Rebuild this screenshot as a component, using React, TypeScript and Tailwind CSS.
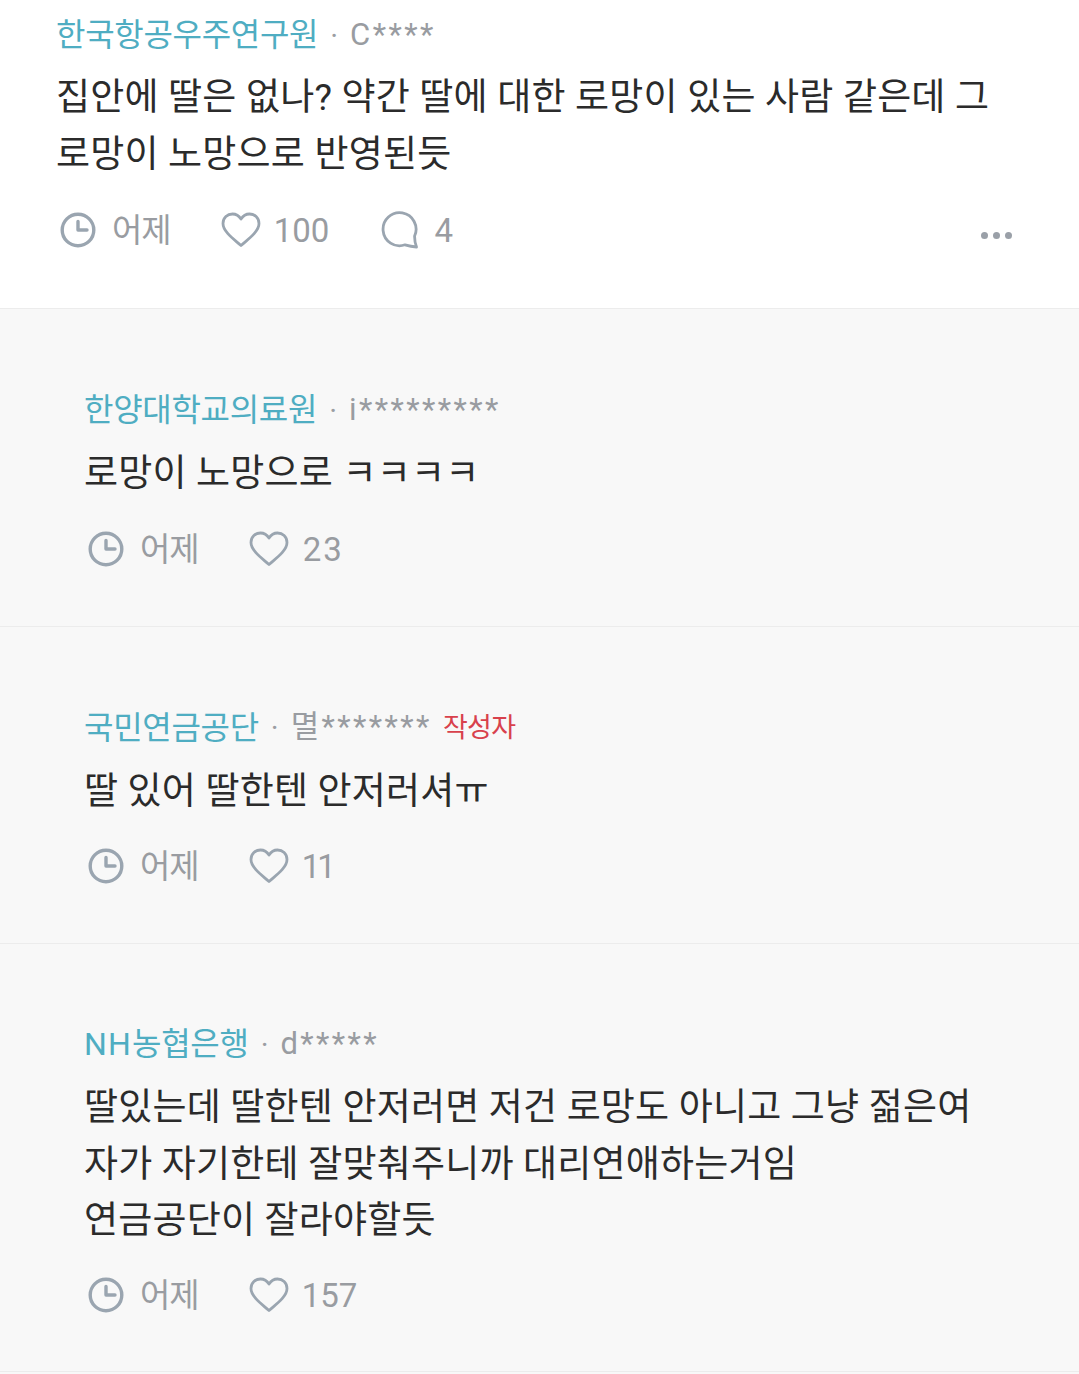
import React from "react";

const Clock = () => (
  <svg width="36" height="36" viewBox="0 0 36 36" fill="none" stroke="#9aa5b0" strokeWidth="3.4" strokeLinecap="round" strokeLinejoin="round">
    <circle cx="18" cy="18" r="15.8" />
    <path d="M18 9.500V18H27" />
  </svg>
);
const Heart = () => (
  <svg width="40" height="36" viewBox="0 0 40 36" fill="none" stroke="#9aa5b0" strokeWidth="2.8" strokeLinejoin="round">
    <path d="M20 33.500C14 28 2 20 2 11.500 2 5.500 6.500 2 11.500 2 15 2 18 3.800 20 7 22 3.800 25 2 28.500 2 33.500 2 38 5.500 38 11.500 38 20 26 28 20 33.500Z" />
  </svg>
);
const Bubble = () => (
  <svg width="38" height="38" viewBox="0 0 38 38" fill="none" stroke="#9aa5b0" strokeWidth="2.8" strokeLinejoin="round" strokeLinecap="round">
    <path d="M33.600 25A16.500 16.500 0 1 0 24 33.800Q30 35.500 35.500 36Q33.500 31 33.600 25Z" />
  </svg>
);
const Stat = ({ icon, text, cls, textCls }: { icon: React.ReactNode; text: string; cls: string; textCls?: string }) => (
  <div className={`flex items-center ${cls}`}>
    {icon}
    <span className={`text-[33px] leading-[40px] text-[#999ca1] font-normal translate-y-[1px] ${textCls ?? ""}`}>{text}</span>
  </div>
);

function Comment({ org, user, author, lines, likes, likesCls, replies, first, last }: { org: React.ReactNode; user: string; author?: boolean; lines: string[]; likes: string; likesCls?: string; replies?: string; first?: boolean; last?: boolean }) {
  const shell = first
    ? "bg-white h-[309px] pl-[56px] pt-[10px] pr-[64px]"
    : last
      ? "bg-[#f8f8f8] pl-[84px] pt-[75px] pr-[64px] pb-[56px]"
      : "bg-[#f8f8f8] pl-[84px] pt-[76px] pr-[64px] pb-[57px]";
  return (
    <section className={`${shell} border-b border-[#ececec]`}>
      <div className="flex items-center h-[50px]">
        <span className="text-[32px] tracking-[-0.3px] text-[#4fadc2] font-normal">{org}</span>
        <span className="text-[#9b9ea3] text-[30px] ml-[12px] font-normal">·</span>
        <span className="text-[#999ca1] text-[31px] tracking-[2.4px] ml-[12px] font-normal">{user}</span>
        {author && <span className="text-[#d8414c] text-[27px] ml-[11px] tracking-[-0.6px] font-normal translate-y-[1px]">작성자</span>}
      </div>
      <div className={first ? "mt-[10px]" : "mt-[11px]"}>
        {lines.map((l) => (
          <div key={l} className="text-[37px] tracking-[0.2px] leading-[56.5px] text-[#2b2b2b] font-normal whitespace-nowrap">{l}</div>
        ))}
      </div>
      <div className={`flex items-center h-[40px] relative ${last ? "mt-[25px]" : first ? "mt-[27px]" : "mt-[26px]"}`}>
        <Stat icon={<Clock />} text="어제" cls="gap-[16px] ml-[4px]" textCls="tracking-[-1px]" />
        <Stat icon={<Heart />} text={likes} cls="gap-[13px] ml-[50px]" textCls={likesCls} />
        {replies && <Stat icon={<Bubble />} text={replies} cls="gap-[15px] ml-[52px]" />}
        {first && (
          <div className="absolute right-[3px] top-[22px] flex gap-[5px]">
            <span className="w-[7px] h-[7px] rounded-full bg-[#9aa0a8]" />
            <span className="w-[7px] h-[7px] rounded-full bg-[#9aa0a8]" />
            <span className="w-[7px] h-[7px] rounded-full bg-[#9aa0a8]" />
          </div>
        )}
      </div>
    </section>
  );
}

export default function App() {
  return (
    <div className="w-[1079px] h-[1374px] overflow-hidden bg-[#f8f8f8] font-['Roboto','Noto_Sans_CJK_KR',sans-serif]">
      <Comment first org="한국항공우주연구원" user="C****" lines={["집안에 딸은 없나? 약간 딸에 대한 로망이 있는 사람 같은데 그", "로망이 노망으로 반영된듯"]} likes="100" replies="4" />
      <Comment org="한양대학교의료원" user="i*********" lines={["로망이 노망으로 ㅋㅋㅋㅋ"]} likes="23" likesCls="tracking-[2px] ml-[1px]" />
      <Comment org="국민연금공단" user="멸*******" author lines={["딸 있어 딸한텐 안저러셔ㅠ"]} likes="11" likesCls="tracking-[-3px]" />
      <Comment last org={<><span className="tracking-[1.2px]">NH</span>농협은행</>} user="d*****" lines={["딸있는데 딸한텐 안저러면 저건 로망도 아니고 그냥 젊은여", "자가 자기한테 잘맞춰주니까 대리연애하는거임", "연금공단이 잘라야할듯"]} likes="157" />
    </div>
  );
}
